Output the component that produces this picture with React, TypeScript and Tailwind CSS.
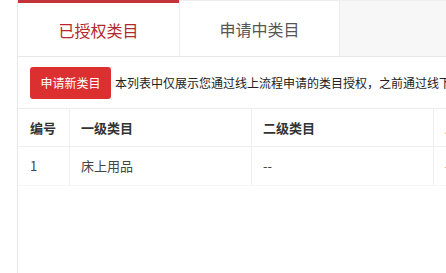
import React from "react";

const columns = [
    { title: "编号", width: "w-[52px]" },
    { title: "一级类目", width: "w-[182px]" },
    { title: "二级类目", width: "w-[182px]" },
    { title: "三级类目", width: "w-[182px]" },
];

const rows = [["1", "床上用品", "--", "--"]];

const App = () => (
    <div className="w-[446px] h-[273px] overflow-hidden bg-white font-['Noto_Sans_CJK_SC','Microsoft_YaHei',sans-serif] text-[#333]">
        <div className="ml-[17px] h-full border-l border-[#e8e8e8] w-[700px]">
            <div className="flex h-[56px]">
                <div className="w-[161px] border-t-[3px] border-[#c4323a] bg-white flex items-center justify-center text-[16px] text-[#b3282e]">
                    已授权类目
                </div>
                <div className="w-[161px] border-t border-x border-[#ededed] bg-white flex items-center justify-center text-[16px] text-[#555]">
                    申请中类目
                </div>
                <div className="flex-1 bg-[#f7f7f7] border-t border-[#ededed]" />
            </div>
            <div className="border-t border-[#e8e8e8]">
                <div className="h-[52px] flex items-center pl-[12px] gap-[4px] border-b border-[#ececec]">
                    <button className="h-[32px] w-[81px] shrink-0 rounded-[3px] bg-[#dc3030] text-white text-[12px]">
                        申请新类目
                    </button>
                    <span className="whitespace-nowrap text-[12px] text-[#222]">
                        本列表中仅展示您通过线上流程申请的类目授权，之前通过线下申请的类目授权请联系您的招商经理查询
                    </span>
                </div>
                <div className="flex h-[38px] border-b border-[#efefef]">
                    {columns.map((col, idx) => (
                        <div
                            key={idx}
                            className={`${col.width} shrink-0 flex items-center border-r border-[#efefef] ${idx === 0 ? "pl-[12px]" : "pl-[11px]"} text-[13px] font-bold text-[#333]`}
                        >
                            {col.title}
                        </div>
                    ))}
                </div>
                {rows.map((row, r) => (
                    <div key={r} className="flex h-[39px] border-b border-[#f6f6f6]">
                        {row.map((cell, idx) => (
                            <div
                                key={idx}
                                className={`${columns[idx].width} shrink-0 flex items-center border-r border-[#efefef] ${idx === 0 ? "pl-[12px]" : "pl-[11px]"} text-[13px] text-[#444]`}
                            >
                                {cell}
                            </div>
                        ))}
                    </div>
                ))}
            </div>
        </div>
    </div>
);

export default App;
